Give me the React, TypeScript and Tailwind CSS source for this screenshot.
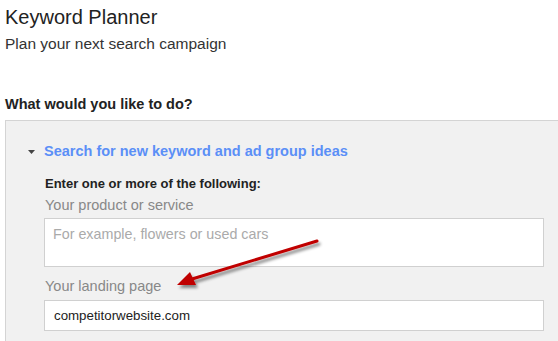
import React from "react";

export default function App() {
  return (
    <div
      className="relative w-[558px] h-[341px] overflow-hidden bg-white"
      style={{ fontFamily: '"Liberation Sans", Arial, sans-serif' }}
    >
      <div className="pl-[5px] pt-[5px]">
        <div className="text-[20px] leading-[24px] text-[#222]">Keyword Planner</div>
        <div className="text-[15.5px] leading-[20px] text-[#333] mt-[5px]">
          Plan your next search campaign
        </div>
        <div className="text-[14.5px] leading-[16px] font-bold text-[#222] mt-[42px]">
          What would you like to do?
        </div>
      </div>
      <div className="ml-[5px] mt-[8px] border-l border-t border-[#d4d4d4] bg-[#f1f1f1] pl-[38px] pr-[14px] pt-[21px] pb-[20px]">
        <div className="flex items-center -ml-[16px] h-[20px]">
          <svg width="7" height="4" viewBox="0 0 7 4" className="mr-[9px]">
            <path d="M0 0 L7 0 L3.5 4 Z" fill="#444" />
          </svg>
          <span className="text-[14.5px] font-bold text-[#5b8ff7]">
            Search for new keyword and ad group ideas
          </span>
        </div>
        <div className="pl-[1px] mt-[14px] text-[13px] leading-[16px] font-bold text-[#222]">
          Enter one or more of the following:
        </div>
        <div className="pl-[1px] mt-[4px] text-[14.5px] leading-[18px] text-[#888]">
          Your product or service
        </div>
        <div className="mt-[4px] h-[49px] bg-white border border-[#d0d0d0] px-[8px] pt-[6px] text-[14.3px] leading-[18px] text-[#aaa]">
          For example, flowers or used cars
        </div>
        <div className="pl-[1px] mt-[10px] text-[14.5px] leading-[18px] text-[#888]">
          Your landing page
        </div>
        <div className="mt-[5px] h-[31px] bg-white border border-[#d0d0d0] px-[9px] flex items-center text-[13.3px] text-[#222]">
          competitorwebsite.com
        </div>
      </div>
      <svg
        className="absolute left-0 top-0 pointer-events-none"
        width="558"
        height="341"
        viewBox="0 0 558 341"
      >
        <defs>
          <filter id="sh" x="-20%" y="-50%" width="140%" height="200%">
            <feDropShadow dx="2" dy="3" stdDeviation="1.8" floodColor="#000" floodOpacity="0.45" />
          </filter>
        </defs>
        <g filter="url(#sh)">
          <line x1="317" y1="241" x2="192" y2="279" stroke="#c00000" strokeWidth="3" strokeLinecap="round" />
          <path d="M177 285 L190 272 L196 285 Z" fill="#c00000" />
        </g>
      </svg>
    </div>
  );
}
